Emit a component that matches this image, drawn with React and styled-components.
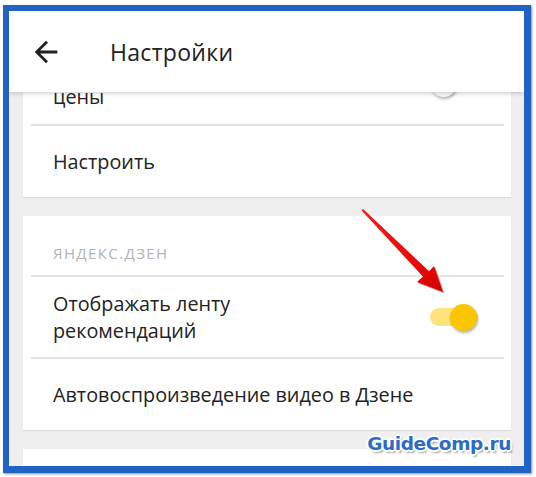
import React from "react";
import styled, { createGlobalStyle } from "styled-components";

const Global = createGlobalStyle`
  html, body { margin: 0; padding: 0; background: #ffffff; }
  body { width: 536px; height: 477px; overflow: hidden; font-family: "Open Sans", "Noto Sans", sans-serif; }
`;

const Frame = styled.div`
  position: relative;
  box-sizing: border-box;
  margin: 5px 0 0 3px;
  width: 528px;
  height: 468px;
  border-style: solid;
  border-color: #2163c3;
  border-width: 6px 7px 7px 6px;
  box-shadow: 1px 1px 2px rgba(0, 0, 0, 0.45);
`;

const Screen = styled.div`
  display: flex;
  flex-direction: column;
  width: 100%;
  height: 100%;
  overflow: hidden;
  background: #efefef;
`;

const Header = styled.header`
  position: relative;
  z-index: 2;
  flex: 0 0 81px;
  display: flex;
  align-items: center;
  gap: 47px;
  padding-left: 20px;
  background: #ffffff;
  box-shadow: 0 2px 4px rgba(0, 0, 0, 0.16);
`;

const BackButton = styled.span`
  display: flex;
  color: #212121;
`;

const Title = styled.h1`
  margin: 0;
  font-size: 23px;
  font-weight: 400;
  color: #212121;
  letter-spacing: 0.3px;
`;

const Content = styled.main`
  flex: 1;
  display: flex;
  flex-direction: column;
  gap: 19px;
  padding: 0 13px 0 14px;
  overflow: hidden;
`;

const Card = styled.section`
  background: #ffffff;
  box-shadow: 0 1px 1px rgba(0, 0, 0, 0.08);
  margin-top: ${(p) => p.$offset || 0}px;
  flex-shrink: 0;
  min-height: ${(p) => p.$minHeight || 0}px;
`;

const Row = styled.div`
  display: flex;
  align-items: center;
  justify-content: space-between;
  height: ${(p) => p.$h}px;
  padding: 0 33px 0 30px;
`;

const Label = styled.div`
  font-size: 19.8px;
  line-height: 27px;
  color: #222222;
`;

const Caption = styled.div`
  display: flex;
  align-items: flex-end;
  height: 59px;
  padding: 0 30px 12px;
  box-sizing: border-box;
  font-size: 15px;
  letter-spacing: 1.4px;
  text-transform: uppercase;
  color: #b3b3b3;
`;

const Divider = styled.hr`
  margin: 0 7px 0 8px;
  border: 0;
  height: 2px;
  background: #e4e4e4;
`;

const Switch = styled.span`
  position: relative;
  flex: 0 0 48px;
  height: 27px;
`;

const Track = styled.span`
  position: absolute;
  left: 0;
  right: 0;
  top: 4px;
  height: 18px;
  border-radius: 9px;
  background: ${(p) => (p.$on ? "#fde37d" : "#cfcfcf")};
`;

const Thumb = styled.span`
  position: absolute;
  top: 0;
  ${(p) => (p.$on ? "right: 1px;" : "left: 0;")}
  width: 27px;
  height: 27px;
  border-radius: 50%;
  background: ${(p) => (p.$on ? "#f9c600" : "#fafafa")};
  box-shadow: 1px 2px 3px rgba(0, 0, 0, 0.3);
`;

const Overlay = styled.svg`
  position: absolute;
  left: -9px;
  top: -11px;
  width: 536px;
  height: 477px;
  pointer-events: none;
  z-index: 5;
`;

const Watermark = styled.div`
  position: absolute;
  right: 13px;
  bottom: 12px;
  z-index: 6;
  font-family: "DejaVu Sans", sans-serif;
  font-weight: 700;
  font-size: 18.5px;
  letter-spacing: -0.4px;
  color: #2c6cc8;
  text-shadow:
    -1px -1px 0 #fff, 1px -1px 0 #fff, -1px 1px 0 #fff, 1px 1px 0 #fff,
    0 -2px 0 #fff, 0 2px 0 #fff, -2px 0 0 #fff, 2px 0 0 #fff,
    2px 3px 2px rgba(0, 0, 0, 0.35);
`;

function Toggle({ on }) {
  return (
    <Switch>
      <Track $on={on} />
      <Thumb $on={on} />
    </Switch>
  );
}

export default function App() {
  return (
    <>
      <Global />
      <Frame>
        <Screen>
          <Header>
            <BackButton>
              <svg width="34" height="34" viewBox="0 0 24 24" fill="currentColor">
                <path d="M20 11H7.83l5.59-5.59L12 4l-8 8 8 8 1.41-1.41L7.83 13H20v-2z" />
              </svg>
            </BackButton>
            <Title>Настройки</Title>
          </Header>
          <Content>
            <Card $offset={-50}>
              <Row $h={82}>
                <Label>
                  Подсказывать
                  <br />
                  цены
                </Label>
                <Toggle on={false} />
              </Row>
              <Divider />
              <Row $h={71}>
                <Label>Настроить</Label>
              </Row>
            </Card>
            <Card>
              <Caption>Яндекс.Дзен</Caption>
              <Divider />
              <Row $h={80}>
                <Label>
                  Отображать ленту
                  <br />
                  рекомендаций
                </Label>
                <Toggle on />
              </Row>
              <Divider />
              <Row $h={71}>
                <Label>Автовоспроизведение видео в Дзене</Label>
              </Row>
            </Card>
            <Card $minHeight={60} />
          </Content>
        </Screen>
        <Overlay viewBox="0 0 536 477">
          <defs>
            <linearGradient id="arrowFill" x1="0" y1="0" x2="1" y2="1">
              <stop offset="0" stopColor="#ff1a1a" />
              <stop offset="1" stopColor="#d90000" />
            </linearGradient>
          </defs>
          <polygon
            points="363,209 429,271.2 434,266 443,292 417,282 423,276.6 361.4,210.2"
            fill="#6b0000"
            opacity="0.35"
            transform="translate(1.5,1.5)"
          />
          <polygon
            points="363,209 429,271.2 434,266 443,292 417,282 423,276.6 361.4,210.2"
            fill="url(#arrowFill)"
          />
        </Overlay>
        <Watermark>GuideComp.ru</Watermark>
      </Frame>
    </>
  );
}
